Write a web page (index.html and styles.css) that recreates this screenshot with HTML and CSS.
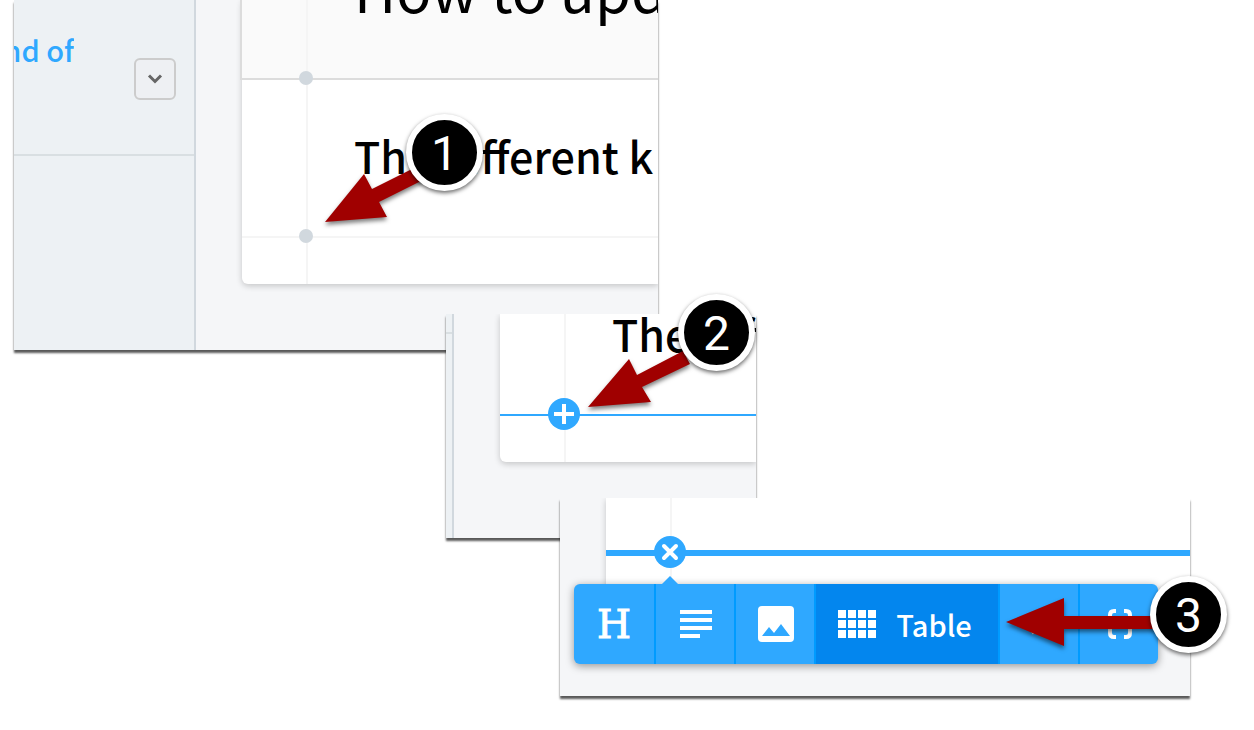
FILE: index.html
```
<!DOCTYPE html>
<html lang="en">
  <head>
    <meta charset="UTF-8" />
    <meta name="viewport" content="width=device-width, initial-scale=1.0" />
    <title>Adding a table</title>
    <link rel="stylesheet" href="styles.css">
  </head>
  <body>
    <main class="canvas">
      <!-- Step 1: the insert dot -->
      <section class="shot shot-one">
        <aside class="sidebar">
          <div class="sidebar-item">
            <a class="sidebar-link" href="#">kind of</a>
            <button class="toggle" type="button" aria-label="Expand">
              <svg width="16" height="12" viewBox="0 0 16 12"><path d="M2 2.500 8 8.500 14 2.500" fill="none" stroke="#666" stroke-width="3" /></svg>
            </button>
          </div>
        </aside>
        <div class="page">
          <article class="card">
            <header class="card-header">
              <div class="rail"><span class="dot"></span></div>
              <h1>How to update</h1>
            </header>
            <div class="block">
              <div class="rail"><span class="dot"></span></div>
              <h2>The different k</h2>
            </div>
            <div class="block-end"><div class="rail"></div></div>
          </article>
        </div>
      </section>

      <!-- Step 2: the plus button -->
      <section class="shot shot-two">
        <aside class="sidebar sidebar-slim">
          <div class="sidebar-item"></div>
        </aside>
        <div class="page">
          <article class="card">
            <div class="block block-hover">
              <div class="rail">
                <button class="insert" type="button" aria-label="Add content">
                  <svg width="32" height="32" viewBox="0 0 32 32"><path d="M16 6v20M6 16h20" stroke="#fff" stroke-width="4" /></svg>
                </button>
              </div>
              <h2>The different</h2>
            </div>
            <div class="block-end"><div class="rail"></div></div>
          </article>
        </div>
      </section>

      <!-- Step 3: the toolbar -->
      <section class="shot shot-three">
        <div class="page">
          <article class="card">
            <div class="block block-open">
              <div class="rail">
                <button class="insert" type="button" aria-label="Close">
                  <svg width="32" height="32" viewBox="0 0 32 32"><path d="M10 10l12 12M22 10 10 22" stroke="#fff" stroke-width="4" stroke-linecap="round" /></svg>
                </button>
              </div>
            </div>
            <div class="block-end"><div class="rail"></div></div>
          </article>
        </div>
        <nav class="toolbar">
          <button class="tool tool-heading" type="button" aria-label="Heading">H</button>
          <button class="tool" type="button" aria-label="Text">
            <svg width="32" height="28" viewBox="0 0 32 28" fill="#fff"><path d="M0 0h32v4H0zM0 8h32v4H0zM0 16h32v4H0zM0 24h20v4H0z" /></svg>
          </button>
          <button class="tool" type="button" aria-label="Image">
            <svg width="36" height="36" viewBox="0 0 36 36"><rect width="36" height="36" rx="4" fill="#fff" /><path d="M4 30l7-9 5 6 7-9 9 12z" fill="#2fa8ff" /></svg>
          </button>
          <button class="tool tool-active" type="button">
            <svg width="38" height="28" viewBox="0 0 38 28" fill="#fff"><path d="M0 0h8v8H0zM10 0h8v8h-8zM20 0h8v8h-8zM30 0h8v8h-8zM0 10h8v8H0zM10 10h8v8h-8zM20 10h8v8h-8zM30 10h8v8h-8zM0 20h8v8H0zM10 20h8v8h-8zM20 20h8v8h-8zM30 20h8v8h-8z" /></svg>
            Table
          </button>
          <button class="tool" type="button" aria-label="More">
            <svg width="32" height="30" viewBox="0 0 32 30"><path d="M6 20l3 4 4-4" fill="none" stroke="#fff" stroke-width="2" /></svg>
          </button>
          <button class="tool" type="button" aria-label="Code">
            <svg width="32" height="32" viewBox="0 0 32 32" fill="none" stroke="#fff" stroke-width="4"><path d="M12 3h-2q-4 0-4 4v5q0 4-3 4 3 0 3 4v5q0 4 4 4h2M20 3h2q4 0 4 4v5q0 4 3 4-3 0-3 4v5q0 4-4 4h-2" /></svg>
          </button>
        </nav>
      </section>

      <!-- Callouts -->
      <svg class="arrow arrow-one" width="110" height="70" viewBox="0 0 110 70"><path d="M5 56 44 8l8 15 46-23 7 13-46 23 8 15z" /></svg>
      <svg class="arrow arrow-two" width="110" height="70" viewBox="0 0 110 70"><path d="M5 56 46 8l8 16 46-24 7 13-48 23 9 15z" /></svg>
      <svg class="arrow arrow-three" width="160" height="60" viewBox="0 0 160 60"><path d="M6 28 64 4v18h92v13H64v17z" /></svg>
      <span class="badge badge-one">1</span>
      <span class="badge badge-two">2</span>
      <span class="badge badge-three">3</span>
    </main>
  </body>
</html>
```
FILE: styles.css
```
* {
  box-sizing: border-box;
}
body {
  margin: 0;
  background: #fff;
  font-family: "Noto Sans CJK SC", "Open Sans", sans-serif;
  color: #000;
}
h1,
h2 {
  margin: 0;
  white-space: nowrap;
}
button {
  padding: 0;
  border: none;
  font-family: inherit;
  cursor: pointer;
}
svg {
  display: block;
}
.canvas {
  position: relative;
  min-height: 100vh;
  overflow: hidden;
}

/* Screens laid over each other */
.shot {
  position: absolute;
  display: flex;
  box-shadow: 0 3px 2px rgba(0, 0, 0, 0.65);
}
.shot-one {
  left: 14px;
  top: 0;
  width: 644px;
  height: 350px;
}
.shot-two {
  left: 446px;
  top: 314px;
  width: 310px;
  height: 224px;
}
.shot-three {
  left: 560px;
  top: 498px;
  width: 630px;
  height: 198px;
}

.sidebar {
  flex: none;
  width: 182px;
  background: #edf1f4;
  border-right: 2px solid #d1d8de;
}
.sidebar-item {
  display: flex;
  justify-content: space-between;
  height: 156px;
  padding-right: 18px;
  border-bottom: 2px solid #d9dfe2;
}
.sidebar-link {
  display: flex;
  justify-content: flex-end;
  width: 60px;
  padding-top: 28px;
  overflow: hidden;
  color: #2fa8ff;
  font-size: 29px;
  font-weight: 500;
  line-height: 42px;
  text-decoration: none;
  white-space: nowrap;
}
.toggle {
  display: grid;
  place-items: center;
  width: 42px;
  height: 42px;
  margin-top: 58px;
  background: #eef0f3;
  border: 2px solid #ccc;
  border-radius: 6px;
}
.sidebar-slim {
  width: 8px;
}
.sidebar-slim .sidebar-item {
  height: 20px;
  padding: 0;
}

.page {
  flex: 1;
  min-width: 0;
  padding-left: 46px;
  overflow: hidden;
  background: #f5f6f8;
}
.card {
  background: #fff;
  border-radius: 0 0 0 6px;
  box-shadow: 0 2px 6px rgba(0, 0, 0, 0.2);
}
.card-header,
.block,
.block-end {
  display: flex;
}
.card-header {
  height: 80px;
  margin-left: -2px;
  background: #fafafa;
  border: 2px solid #dcdcdc;
  border-width: 0 0 2px 2px;
}
.block {
  height: 158px;
  border-bottom: 2px solid #f5f5f5;
}
.block-end {
  height: 46px;
}
.rail {
  position: relative;
  flex: none;
  width: 66px;
  border-right: 2px solid #f5f5f5;
}
.dot {
  position: absolute;
  z-index: 1;
  right: -7px;
  bottom: -7px;
  width: 14px;
  height: 14px;
  border-radius: 50%;
  background: #d1d8de;
}
.card h1 {
  margin-top: -55px;
  padding-left: 46px;
  font-size: 58px;
  font-weight: 400;
  line-height: 86px;
}
.card h2 {
  padding: 44px 0 0 46px;
  font-size: 43px;
  font-weight: 500;
  line-height: 62px;
}
.block-hover {
  height: 102px;
  border-bottom-color: #2fa8ff;
}
.block-hover h2 {
  padding-top: 0;
  margin-top: -12px;
}
.block-open {
  height: 58px;
  border-bottom: 6px solid #2fa8ff;
}
.insert {
  position: absolute;
  z-index: 1;
  right: -16px;
  bottom: -16px;
  width: 32px;
  height: 32px;
  border-radius: 50%;
  background: #2fa8ff;
}
.block-open .insert {
  bottom: -18px;
}

.toolbar {
  position: absolute;
  z-index: 2;
  left: 14px;
  right: 32px;
  bottom: 32px;
  display: flex;
  height: 80px;
  border-radius: 6px;
  background: #2fa8ff;
  box-shadow: 0 2px 8px rgba(0, 0, 0, 0.4);
}
.toolbar::before {
  content: "";
  position: absolute;
  left: 88px;
  top: -8px;
  border: 8px solid transparent;
  border-top: none;
  border-bottom-color: #2fa8ff;
}
.tool {
  display: flex;
  flex: none;
  align-items: center;
  justify-content: center;
  gap: 20px;
  width: 80px;
  padding-left: 2px;
  background: none;
  border-right: 2px solid #009bff;
  color: #fff;
  font-size: 29px;
  font-weight: 500;
}
.tool:last-child {
  flex: 1;
  border-right: none;
}
.tool-heading {
  width: 82px;
  padding-left: 0;
  font-family: "DejaVu Serif", serif;
  font-size: 39px;
  font-weight: 400;
  -webkit-text-stroke: 1px #fff;
}
.tool-active {
  width: 184px;
  padding-right: 6px;
  background: #0386ee;
}

.arrow {
  position: absolute;
  z-index: 3;
  fill: #a00000;
  filter: drop-shadow(0 3px 2px rgba(0, 0, 0, 0.5));
}
.arrow-one {
  left: 320px;
  top: 166px;
}
.arrow-two {
  left: 583px;
  top: 351px;
}
.arrow-three {
  left: 1000px;
  top: 594px;
}
.badge {
  position: absolute;
  z-index: 4;
  width: 77px;
  height: 77px;
  border: 6px solid #fff;
  border-radius: 50%;
  background: #000;
  box-shadow: 0 2px 4px rgba(0, 0, 0, 0.6);
  color: #fff;
  font-family: Roboto, "Liberation Sans", sans-serif;
  font-size: 48px;
  line-height: 67px;
  text-align: center;
}
.badge-one {
  left: 406px;
  top: 114px;
}
.badge-two {
  left: 678px;
  top: 294px;
}
.badge-three {
  left: 1150px;
  top: 576px;
}
```
